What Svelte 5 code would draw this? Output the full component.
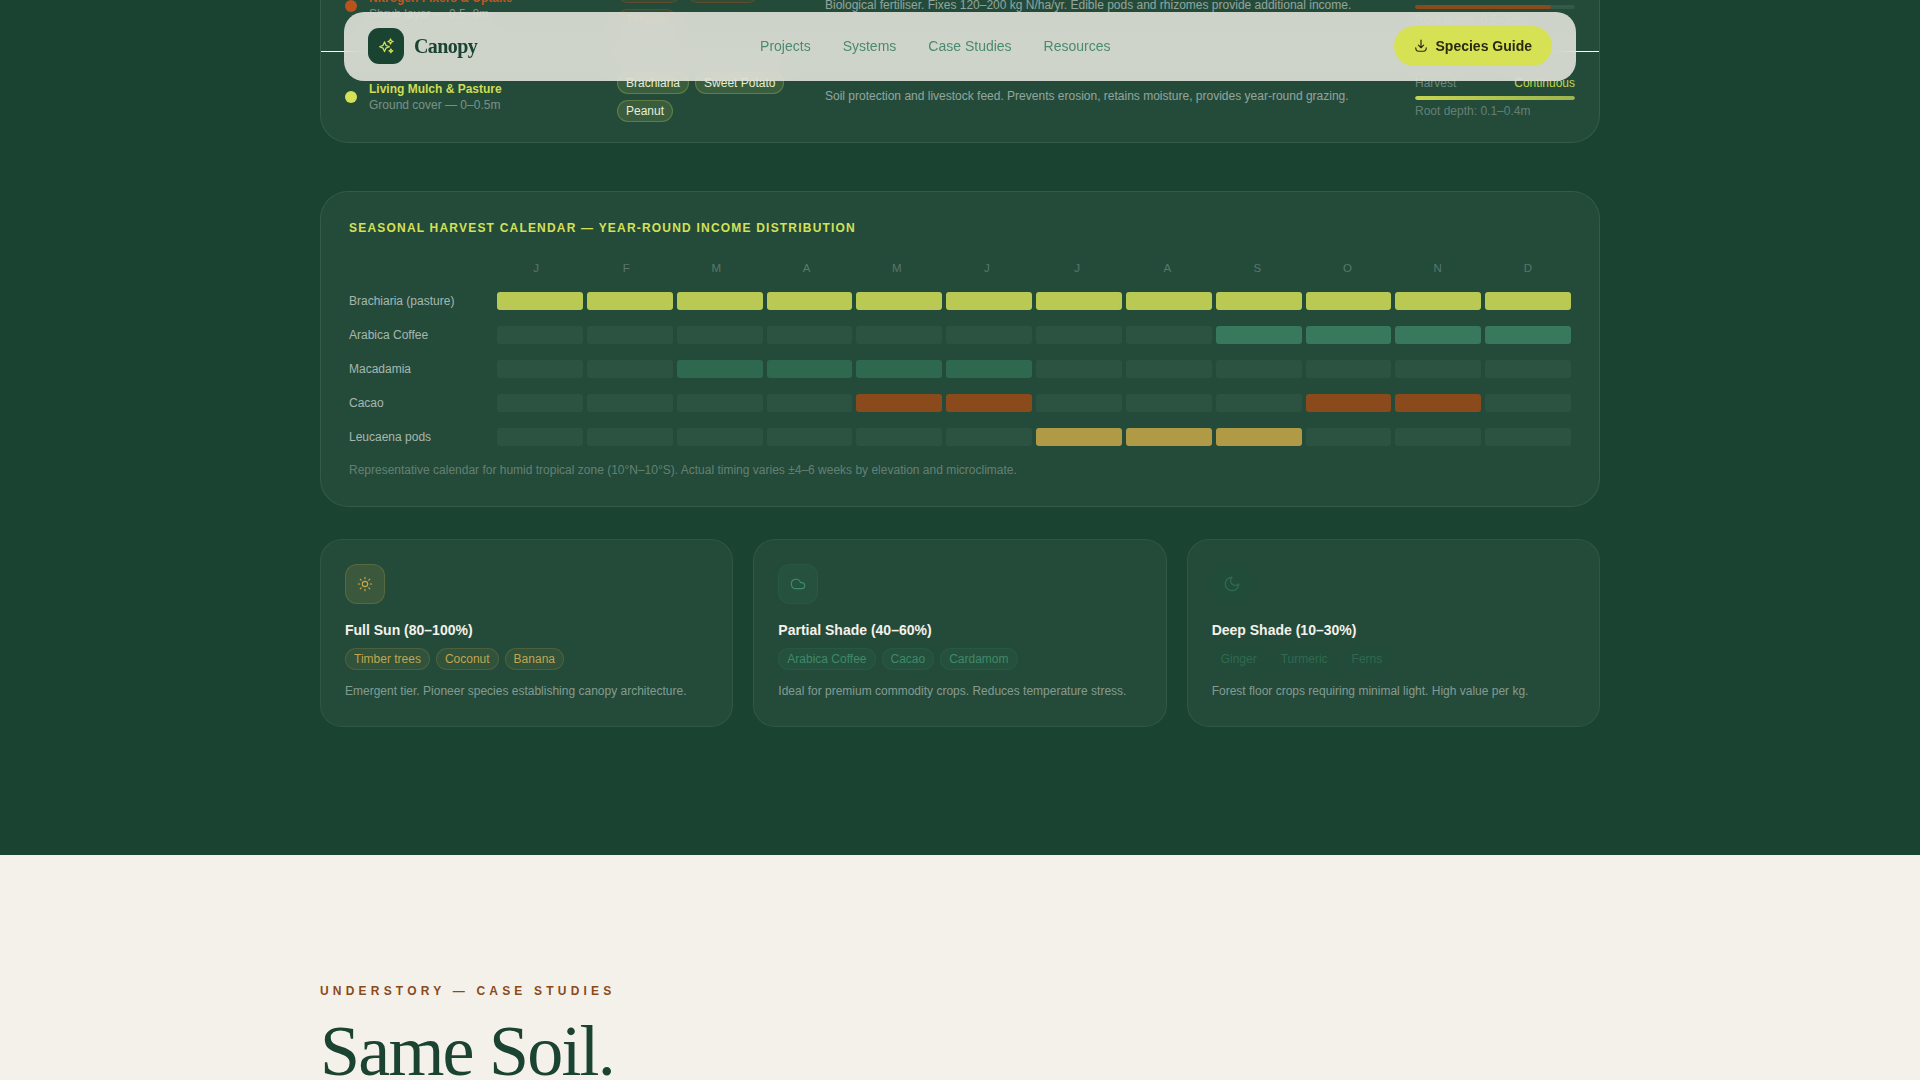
<script lang="ts">
  // Scrolled view of the agroforestry page: nav floats over the strata table.
  const links = ['Projects', 'Systems', 'Case Studies', 'Resources'];

  const strata = [
    {
      tone: 'rust',
      name: 'Nitrogen Fixers & Uptake',
      layer: 'Shrub layer — 0.5–8m',
      tags: ['Gliricidia', 'Calliandra', 'Tithonia'],
      note: 'Biological fertiliser. Fixes 120–200 kg N/ha/yr. Edible pods and rhizomes provide additional income.',
      value: 'Year 2+',
      fill: 85,
      depth: 'Root depth: 0.5–3m'
    },
    {
      tone: 'lime',
      name: 'Living Mulch & Pasture',
      layer: 'Ground cover — 0–0.5m',
      tags: ['Brachiaria', 'Sweet Potato', 'Peanut'],
      note: 'Soil protection and livestock feed. Prevents erosion, retains moisture, provides year-round grazing.',
      value: 'Continuous',
      fill: 100,
      depth: 'Root depth: 0.1–0.4m'
    }
  ];

  const months = ['J', 'F', 'M', 'A', 'M', 'J', 'J', 'A', 'S', 'O', 'N', 'D'];

  const harvest = [
    { crop: 'Brachiaria (pasture)', tone: 'lime', on: [0, 1, 2, 3, 4, 5, 6, 7, 8, 9, 10, 11] },
    { crop: 'Arabica Coffee', tone: 'leaf', on: [8, 9, 10, 11] },
    { crop: 'Macadamia', tone: 'moss', on: [2, 3, 4, 5] },
    { crop: 'Cacao', tone: 'rust', on: [4, 5, 9, 10] },
    { crop: 'Leucaena pods', tone: 'gold', on: [6, 7, 8] }
  ];

  const light = [
    {
      tone: 'sun',
      title: 'Full Sun (80–100%)',
      tags: ['Timber trees', 'Coconut', 'Banana'],
      text: 'Emergent tier. Pioneer species establishing canopy architecture.'
    },
    {
      tone: 'part',
      title: 'Partial Shade (40–60%)',
      tags: ['Arabica Coffee', 'Cacao', 'Cardamom'],
      text: 'Ideal for premium commodity crops. Reduces temperature stress.'
    },
    {
      tone: 'deep',
      title: 'Deep Shade (10–30%)',
      tags: ['Ginger', 'Turmeric', 'Ferns'],
      text: 'Forest floor crops requiring minimal light. High value per kg.'
    }
  ];
</script>

<nav class="nav">
  <div class="brand">
    <span class="logo">
      <svg viewBox="0 0 24 24" width="18" height="18" fill="none" stroke="#d4e157" stroke-width="1.7" stroke-linejoin="round">
        <path d="M10 6.500l1.900 4.600 4.600 1.900-4.600 1.900L10 19.500l-1.900-4.600L3.500 13l4.600-1.900z" />
        <path d="M18 2.500l1 2.500 2.500 1-2.500 1-1 2.500-1-2.500-2.500-1 2.500-1z" />
        <path d="M18.500 16l.8 1.700 1.700.8-1.700.8-.8 1.700-.8-1.700-1.700-.8 1.700-.8z" />
      </svg>
    </span>
    <span class="word">Canopy</span>
  </div>
  <div class="links">
    {#each links as link}
      <a href="#top">{link}</a>
    {/each}
  </div>
  <button class="cta">
    <svg viewBox="0 0 24 24" width="14" height="14" fill="none" stroke="currentColor" stroke-width="2" stroke-linecap="round" stroke-linejoin="round">
      <path d="M12 2v13M7.500 10.500L12 15l4.500-4.500" />
      <path d="M3 15c0 4 2 6 5 6h8c3 0 5-2 5-6" />
    </svg>
    Species Guide
  </button>
</nav>

<section class="forest">
  <div class="panel strata">
    {#each strata as row}
      <div class="stratum">
        <div class="who">
          <span class="dot {row.tone}"></span>
          <div>
            <div class="name {row.tone}">{row.name}</div>
            <div class="layer">{row.layer}</div>
          </div>
        </div>
        <div class="tags narrow">
          {#each row.tags as tag}
            <span class="tag {row.tone}">{tag}</span>
          {/each}
        </div>
        <p class="note">{row.note}</p>
        <div class="yield">
          <div class="yield-head">
            <span>Harvest</span>
            <span class="value {row.tone}">{row.value}</span>
          </div>
          <div class="track">
            <div class="fill {row.tone}" style="width: {row.fill}%"></div>
          </div>
          <div class="depth">{row.depth}</div>
        </div>
      </div>
    {/each}
  </div>

  <div class="panel calendar">
    <h3>Seasonal Harvest Calendar — Year-Round Income Distribution</h3>
    <div class="months">
      <span></span>
      {#each months as m}
        <span class="month">{m}</span>
      {/each}
    </div>
    <div class="chart">
      {#each harvest as row}
        <div class="crop">
          <span class="crop-name">{row.crop}</span>
          {#each months as _, i}
            <span class="cell {row.on.includes(i) ? row.tone : ''}"></span>
          {/each}
        </div>
      {/each}
    </div>
    <p class="foot">Representative calendar for humid tropical zone (10°N–10°S). Actual timing varies ±4–6 weeks by elevation and microclimate.</p>
  </div>

  <div class="cards">
    {#each light as card}
      <article class="card">
        <span class="badge {card.tone}">
          <svg viewBox="0 0 24 24" width={card.tone === 'deep' ? 18 : 16} height={card.tone === 'deep' ? 18 : 16} fill="none" stroke="currentColor" stroke-width="1.7" stroke-linecap="round" stroke-linejoin="round">
            {#if card.tone === 'sun'}
              <circle cx="12" cy="12" r="4" />
              <path d="M12 2v2M12 20v2M4.900 4.900l1.400 1.400M17.700 17.700l1.400 1.400M2 12h2M20 12h2M6.300 17.700l-1.400 1.400M19.100 4.900l-1.400 1.400" />
            {:else if card.tone === 'part'}
              <path d="M17.500 19H9a7 7 0 1 1 6.710-9h1.790a4.500 4.500 0 1 1 0 9Z" />
            {:else}
              <path d="M12 3a6 6 0 0 0 9 9 9 9 0 1 1-9-9Z" />
            {/if}
          </svg>
        </span>
        <h4>{card.title}</h4>
        <div class="tags">
          {#each card.tags as tag}
            <span class="tag {card.tone}">{tag}</span>
          {/each}
        </div>
        <p class="card-text">{card.text}</p>
      </article>
    {/each}
  </div>
</section>

<section class="understory">
  <div class="eyebrow">Understory — Case Studies</div>
  <h2>Same Soil.</h2>
</section>

<style>
  :global(body) {
    margin: 0;
    height: 100vh;
    overflow: hidden;
    background: #f4f1ea;
    font-family: "Liberation Sans", Arial, sans-serif;
  }

  .nav {
    position: fixed;
    z-index: 10;
    top: 12px;
    left: 344px;
    width: 1232px;
    height: 69px;
    box-sizing: border-box;
    padding: 0 24px 1px;
    display: flex;
    align-items: center;
    justify-content: space-between;
    background: rgba(244, 241, 234, 0.82);
    backdrop-filter: blur(12px);
    border-radius: 20px;
  }

  .brand {
    display: flex;
    align-items: center;
    gap: 10px;
  }

  .logo {
    width: 36px;
    height: 36px;
    border-radius: 11px;
    background: #1b4332;
    display: flex;
    align-items: center;
    justify-content: center;
  }

  .word {
    font-family: "Liberation Serif", "Times New Roman", serif;
    font-size: 20px;
    font-weight: 700;
    letter-spacing: -0.03em;
    color: #1b4332;
  }

  .links {
    display: flex;
    gap: 32px;
  }

  .links a {
    font-size: 14px;
    color: #4a8a70;
    text-decoration: none;
  }

  .cta {
    height: 40px;
    padding: 0 20px;
    display: flex;
    align-items: center;
    gap: 8px;
    border: none;
    border-radius: 100px;
    background: #d6e254;
    color: #2a2a10;
    font-family: inherit;
    font-size: 14px;
    font-weight: 700;
  }

  .forest {
    height: 855px;
    box-sizing: border-box;
    padding: 0 320px 128px;
    display: flex;
    flex-direction: column;
    justify-content: flex-end;
    overflow: hidden;
    background: #1b4332;
  }

  .panel {
    flex-shrink: 0;
    background: rgba(255, 255, 255, 0.045);
    border: 1px solid rgba(255, 255, 255, 0.08);
    border-radius: 28px;
  }

  .strata {
    margin-bottom: 48px;
  }

  .stratum {
    display: grid;
    grid-template-columns: 272px 208px 1fr 160px;
    align-items: center;
    padding: 20px 24px;
    border-bottom: 1px solid #fff;
  }

  .stratum:last-child {
    border-bottom: none;
  }

  .who {
    display: flex;
    align-items: center;
    gap: 12px;
  }

  .dot {
    width: 12px;
    height: 12px;
    border-radius: 50%;
    flex-shrink: 0;
  }

  .dot.rust {
    background: #b8531e;
  }

  .dot.lime {
    background: #d4e157;
  }

  .name {
    font-size: 12px;
    font-weight: 700;
    line-height: 16px;
  }

  .name.rust {
    color: #c2561f;
  }

  .name.lime {
    color: #cfdc55;
  }

  .layer {
    font-size: 12px;
    line-height: 16px;
    color: rgba(255, 255, 255, 0.4);
  }

  .tags {
    display: flex;
    flex-wrap: wrap;
    gap: 6px;
  }

  .tags.narrow {
    padding-right: 20px;
  }

  .tag {
    font-size: 12px;
    line-height: 14px;
    padding: 3px 8px;
    border: 1px solid;
    border-radius: 100px;
  }

  .tag.rust {
    color: #8a7a45;
    background: rgba(139, 74, 28, 0.15);
    border-color: rgba(194, 86, 31, 0.3);
  }

  .tag.lime {
    color: #e8edd8;
    background: rgba(212, 225, 87, 0.13);
    border-color: rgba(212, 225, 87, 0.25);
  }

  .tag.sun {
    color: #c2a54e;
    background: rgba(201, 168, 76, 0.08);
    border-color: rgba(201, 168, 76, 0.18);
  }

  .tag.part {
    color: #3f8a68;
    background: rgba(45, 122, 90, 0.12);
    border-color: rgba(45, 122, 90, 0.2);
  }

  .tag.deep {
    color: #2f6a50;
    background: rgba(30, 80, 60, 0.15);
    border-color: rgba(30, 80, 60, 0.15);
  }

  .note {
    margin: 0 0 2px;
    font-size: 12px;
    line-height: 18px;
    white-space: nowrap;
    color: rgba(255, 255, 255, 0.5);
  }

  .yield-head {
    display: flex;
    justify-content: space-between;
    font-size: 12px;
    line-height: 14px;
    color: rgba(255, 255, 255, 0.35);
  }

  .value.rust {
    color: #c2561f;
  }

  .value.lime {
    color: #c5d450;
  }

  .track {
    height: 4px;
    margin: 6px 0 4px;
    border-radius: 2px;
    background: rgba(255, 255, 255, 0.08);
    overflow: hidden;
  }

  .fill {
    height: 100%;
    border-radius: 2px;
  }

  .fill.rust {
    background: #8b4a1c;
  }

  .fill.lime {
    background: linear-gradient(90deg, #c5d450, #9db44f);
  }

  .depth {
    font-size: 12px;
    line-height: 14px;
    color: rgba(255, 255, 255, 0.3);
  }

  .calendar {
    padding: 29px 28px 28px;
    margin-bottom: 32px;
  }

  h3 {
    margin: 0 0 26px;
    font-size: 12px;
    line-height: 14px;
    font-weight: 700;
    letter-spacing: 0.1em;
    text-transform: uppercase;
    color: #d4e157;
  }

  .months {
    display: grid;
    grid-template-columns: 140px repeat(12, 1fr);
    gap: 4px;
    margin-bottom: 17px;
  }

  .month {
    text-align: center;
    font-size: 11.5px;
    line-height: 14px;
    color: rgba(255, 255, 255, 0.25);
  }

  .chart {
    display: flex;
    flex-direction: column;
    gap: 16px;
  }

  .crop {
    display: grid;
    grid-template-columns: 144px repeat(12, 1fr);
    gap: 4px;
    align-items: center;
    height: 18px;
  }

  .crop-name {
    font-size: 12px;
    white-space: nowrap;
    color: rgba(255, 255, 255, 0.6);
  }

  .cell {
    height: 18px;
    border-radius: 3px;
    background: rgba(255, 255, 255, 0.04);
  }

  .cell.lime {
    background: #b9c954;
  }

  .cell.leaf {
    background: #38795d;
  }

  .cell.moss {
    background: #2e684f;
  }

  .cell.rust {
    background: #8b4a1c;
  }

  .cell.gold {
    background: #b09a45;
  }

  .foot {
    margin: 17px 0 1px;
    font-size: 12px;
    line-height: 14px;
    color: rgba(255, 255, 255, 0.3);
  }

  .cards {
    flex-shrink: 0;
    display: grid;
    grid-template-columns: repeat(3, 1fr);
    gap: 20px;
  }

  .card {
    padding: 24px 24px 26px;
    background: rgba(255, 255, 255, 0.045);
    border: 1px solid rgba(255, 255, 255, 0.06);
    border-radius: 22px;
  }

  .badge {
    width: 40px;
    height: 40px;
    box-sizing: border-box;
    border: 1px solid;
    border-radius: 12px;
    display: flex;
    align-items: center;
    justify-content: center;
  }

  .badge.sun {
    color: #c9a84c;
    background: rgba(201, 168, 76, 0.15);
    border-color: rgba(201, 168, 76, 0.2);
  }

  .badge.part {
    color: #3f8a68;
    background: rgba(45, 122, 90, 0.15);
    border-color: rgba(45, 122, 90, 0.2);
  }

  .badge.deep {
    color: #2f6a50;
    background: rgba(30, 80, 60, 0.2);
    border-color: rgba(30, 80, 60, 0.2);
  }

  h4 {
    margin: 16px 0 8px;
    font-size: 14px;
    line-height: 20px;
    font-weight: 700;
    color: #f4f1ea;
  }

  .card-text {
    margin: 12px 0 0;
    font-size: 12px;
    line-height: 18px;
    color: rgba(255, 255, 255, 0.45);
  }

  .understory {
    padding: 129px 320px 0;
    background: #f4f1ea;
  }

  .eyebrow {
    font-size: 12px;
    line-height: 14px;
    font-weight: 700;
    letter-spacing: 0.35em;
    text-transform: uppercase;
    color: #8b4a1c;
  }

  h2 {
    margin: 14px 0 0;
    font-family: "Liberation Serif", "Times New Roman", serif;
    font-size: 72px;
    line-height: 1.1;
    font-weight: 400;
    letter-spacing: -0.025em;
    color: #1b4332;
  }
</style>
